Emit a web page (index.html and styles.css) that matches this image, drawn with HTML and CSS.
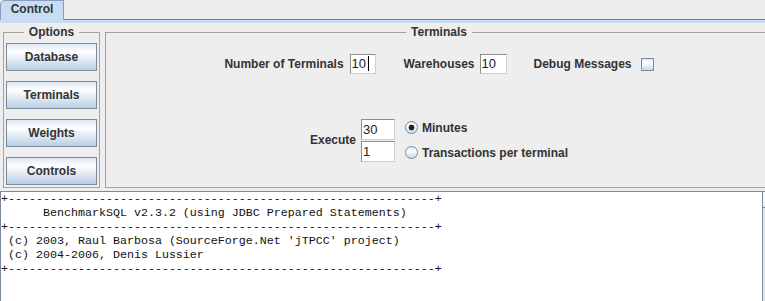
FILE: index.html
```html
<!DOCTYPE html>
<html lang="en">
  <head>
    <meta charset="UTF-8" />
    <title>BenchmarkSQL</title>
    <link rel="stylesheet" href="styles.css">
  </head>
  <body>
    <div class="window">
      <div class="tabbar">
        <div class="tab">Control</div>
      </div>
      <div class="tab-body">
        <div class="panels">
          <fieldset class="group options">
            <legend>Options</legend>
            <button class="btn">Database</button>
            <button class="btn">Terminals</button>
            <button class="btn">Weights</button>
            <button class="btn">Controls</button>
          </fieldset>
          <fieldset class="group terminals">
            <legend>Terminals</legend>
            <div class="row row-top">
              <span class="lbl">Number of Terminals</span>
              <span class="field f-terms">10<span class="caret"></span></span>
              <span class="lbl l-wh">Warehouses</span>
              <span class="field f-wh">10</span>
              <span class="lbl l-debug">Debug Messages</span>
              <span class="check"></span>
            </div>
            <div class="row row-exec">
              <span class="lbl">Execute</span>
              <div class="stack">
                <span class="field f-exec">30</span>
                <span class="field f-exec">1</span>
              </div>
              <div class="radios">
                <div class="radio-row"><span class="radio checked"></span>Minutes</div>
                <div class="radio-row"><span class="radio"></span>Transactions per terminal</div>
              </div>
            </div>
          </fieldset>
        </div>
        <div class="scrollpane">
<pre class="console">+-------------------------------------------------------------+
      BenchmarkSQL v2.3.2 (using JDBC Prepared Statements)
+-------------------------------------------------------------+
 (c) 2003, Raul Barbosa (SourceForge.Net 'jTPCC' project)
 (c) 2004-2006, Denis Lussier
+-------------------------------------------------------------+
</pre>
          <div class="scrollbar">
            <div class="arrow"></div>
          </div>
        </div>
      </div>
    </div>
  </body>
</html>
```

FILE: styles.css
```css
body {
  margin: 0;
  background-color: #eeeeee;
  font-family: Arial, "Liberation Sans", sans-serif;
  overflow: hidden;
}

.window {
  width: 777px;
  height: 301px;
  display: flex;
  flex-direction: column;
}

/* tab strip */
.tabbar {
  display: flex;
  height: 20px;
}

.tab {
  box-sizing: border-box;
  width: 64px;
  height: 20px;
  border: 1px solid #8a9cc0;
  border-bottom: none;
  border-top-left-radius: 5px;
  background-color: #c8ddf2;
  color: #333;
  font-size: 12px;
  font-weight: bold;
  line-height: 17px;
  text-align: center;
}

.tabbar::after {
  content: "";
  flex: 1;
  border-bottom: 1px solid #6382bf;
}

.tab-body {
  flex: 1;
  display: flex;
  flex-direction: column;
  border-top: 3px solid #c8ddf2;
}

/* group boxes */
.panels {
  display: flex;
  gap: 5px;
  height: 164px;
  padding: 1px 4px 0 3px;
}

.group {
  margin: 0;
  padding: 0;
  min-width: 0;
  border: 1px solid #a3a3a3;
}

.group legend {
  margin: 0 auto;
  padding: 0 5px;
  color: #333;
  font-size: 12px;
  font-weight: bold;
  line-height: 16px;
}

.options {
  width: 97px;
  box-sizing: border-box;
  display: flex;
  flex-direction: column;
  gap: 10px;
  padding: 3px 2px 0;
}

.btn {
  height: 28px;
  padding: 0;
  border: 1px solid #7a8a99;
  background: linear-gradient(to bottom, #dde8f3 0%, #ffffff 30%, #b8cfe5 100%);
  color: #333;
  font-family: Arial, "Liberation Sans", sans-serif;
  font-size: 12px;
  font-weight: bold;
}

.terminals {
  flex: 1;
}

.row {
  display: flex;
  justify-content: center;
  align-items: center;
}

.row-top {
  margin-top: 14px;
}

.row-exec {
  margin-top: 43px;
}

.lbl {
  color: #333;
  font-size: 12px;
  font-weight: bold;
}

.field {
  display: block;
  box-sizing: border-box;
  height: 20px;
  padding-left: 1px;
  border: 1px solid;
  border-color: #8e8e8e #cfcfcf #cfcfcf #8e8e8e;
  background-color: #fff;
  color: #222;
  font-size: 13px;
  line-height: 18px;
}

.caret {
  display: inline-block;
  width: 1px;
  height: 15px;
  margin-left: 2px;
  vertical-align: -3px;
  background-color: #000;
}

.f-terms {
  width: 26px;
  margin: 0 28px 0 6px;
}

.f-wh {
  width: 27px;
  margin: 0 27px 0 5px;
}

.l-debug {
  margin-right: 9px;
}

.check {
  box-sizing: border-box;
  width: 13px;
  height: 13px;
  border: 1px solid #7a8a99;
  background: linear-gradient(to bottom, #dde8f3, #ffffff 35%, #c4d6ea);
}

.stack {
  display: flex;
  flex-direction: column;
  gap: 1px;
  margin: 0 10px 0 5px;
}

.f-exec {
  width: 34px;
  height: 21px;
  line-height: 19px;
}

.radios {
  display: flex;
  flex-direction: column;
  gap: 4px;
}

.radio-row {
  display: flex;
  align-items: center;
  gap: 4px;
  height: 21px;
  color: #333;
  font-size: 12px;
  font-weight: bold;
}

.radio {
  box-sizing: border-box;
  width: 13px;
  height: 13px;
  border: 1px solid #7a8a99;
  border-radius: 50%;
  background: linear-gradient(to bottom, #dde8f3, #ffffff 35%, #c4d6ea);
}

.radio.checked {
  background: radial-gradient(circle, #222 0 2.6px, transparent 3.2px),
    linear-gradient(to bottom, #dde8f3, #ffffff 35%, #c4d6ea);
}

/* console */
.scrollpane {
  flex: 1;
  display: flex;
  margin-top: 3px;
}

.console {
  box-sizing: border-box;
  flex: 0 0 763px;
  margin: 0;
  padding: 0;
  border: 1px solid #7a8a99;
  border-bottom: none;
  background-color: #fff;
  color: #111;
  font-family: "Liberation Mono", "Courier New", monospace;
  font-size: 11.67px;
  line-height: 14px;
}

.scrollbar {
  flex: 1;
  border-top: 1px solid #7a8a99;
  background-color: #dde8f3;
}

.arrow {
  height: 15px;
  border-bottom: 1px solid #7a8a99;
  background-color: #f4f7fb;
}
```
